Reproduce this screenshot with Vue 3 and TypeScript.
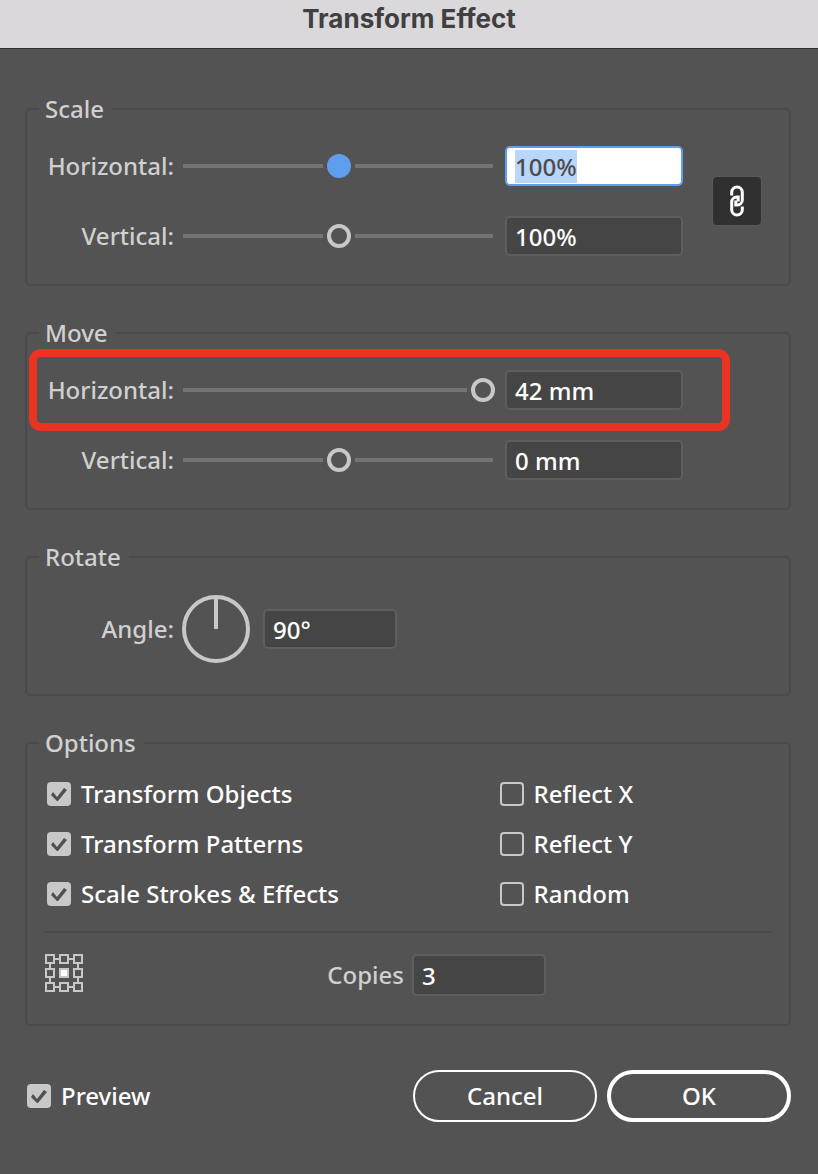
<script setup lang="ts">
import { onMounted, reactive, ref } from 'vue'

interface SliderRow {
  id: string
  label: string
  min: number
  max: number
  position: number
  text: string
  active?: boolean
  marked?: boolean
}

interface Option {
  id: string
  label: string
  checked: boolean
}

const scaleRows = reactive<SliderRow[]>([
  { id: 'scale-h', label: 'Horizontal:', min: 0, max: 200, position: 100, text: '100%', active: true },
  { id: 'scale-v', label: 'Vertical:', min: 0, max: 200, position: 100, text: '100%' },
])

const moveRows = reactive<SliderRow[]>([
  { id: 'move-h', label: 'Horizontal:', min: -35, max: 35, position: 35, text: '42 mm', marked: true },
  { id: 'move-v', label: 'Vertical:', min: -35, max: 35, position: 0, text: '0 mm' },
])

const options = reactive<Option[]>([
  { id: 'objects', label: 'Transform Objects', checked: true },
  { id: 'reflect-x', label: 'Reflect X', checked: false },
  { id: 'patterns', label: 'Transform Patterns', checked: true },
  { id: 'reflect-y', label: 'Reflect Y', checked: false },
  { id: 'strokes', label: 'Scale Strokes & Effects', checked: true },
  { id: 'random', label: 'Random', checked: false },
])

const angle = ref('90°')
const copies = ref('3')
const preview = ref(true)
const linked = ref(true)

const anchors = [0, 14, 28].flatMap((y) => [0, 14, 28].map((x) => ({ x, y })))
  .filter((a) => !(a.x === 14 && a.y === 14))

onMounted(() => {
  const field = document.getElementById('scale-h') as HTMLInputElement | null
  field?.focus()
  field?.select()
})
</script>

<template>
  <div class="dialog" role="dialog" aria-labelledby="dialog-title">
    <header class="titlebar">
      <h1 id="dialog-title">Transform Effect</h1>
    </header>

    <form class="body" @submit.prevent>
      <fieldset class="group">
        <legend>Scale</legend>
        <div class="sliders">
          <div class="rows">
            <div v-for="row in scaleRows" :key="row.id" class="row">
              <label :for="row.id">{{ row.label }}</label>
              <input
                v-model.number="row.position"
                type="range"
                :class="{ active: row.active }"
                :min="row.min"
                :max="row.max"
                :aria-label="'Scale ' + row.label"
              />
              <input :id="row.id" v-model="row.text" class="field" type="text" />
            </div>
          </div>
          <button
            class="link"
            type="button"
            aria-label="Constrain proportions"
            :aria-pressed="linked"
            @click="linked = !linked"
          >
            <svg viewBox="0 0 48 48" width="48" height="48" aria-hidden="true">
              <path d="M18.700 18.500V15.300a5.300 5.300 0 0 1 10.600 0V23a5 5 0 0 1-5 5H22.800V23.500" />
              <path d="M29.300 29.500V32.700a5.300 5.300 0 0 1-10.600 0V25a5 5 0 0 1 5-5H25.200V24.500" />
            </svg>
          </button>
        </div>
      </fieldset>

      <fieldset class="group">
        <legend>Move</legend>
        <div class="sliders">
          <div class="rows">
            <div v-for="row in moveRows" :key="row.id" class="row" :class="{ marked: row.marked }">
              <label :for="row.id">{{ row.label }}</label>
              <input
                v-model.number="row.position"
                type="range"
                :min="row.min"
                :max="row.max"
                :aria-label="'Move ' + row.label"
              />
              <input :id="row.id" v-model="row.text" class="field" type="text" />
            </div>
          </div>
          <span class="spacer"></span>
        </div>
      </fieldset>

      <fieldset class="group">
        <legend>Rotate</legend>
        <div class="rotate">
          <label for="angle">Angle:</label>
          <button class="dial" type="button" aria-label="Angle dial">
            <svg viewBox="0 0 68 68" width="68" height="68" aria-hidden="true">
              <circle cx="34" cy="34" r="32" />
              <path d="M34 2V34" />
            </svg>
          </button>
          <input id="angle" v-model="angle" class="field short" type="text" />
        </div>
      </fieldset>

      <fieldset class="group options-group">
        <legend>Options</legend>
        <div class="options">
          <label v-for="option in options" :key="option.id" class="check" :for="option.id">
            <input :id="option.id" v-model="option.checked" type="checkbox" />
            <span>{{ option.label }}</span>
          </label>
        </div>
        <hr />
        <div class="copies">
          <div class="copies-label">
            <button class="anchor" type="button" aria-label="Reference point">
              <svg viewBox="0 0 38 38" width="38" height="38" aria-hidden="true">
                <path d="M10 5H14M24 5H28M10 33H14M24 33H28M5 10V14M5 24V28M33 10V14M33 24V28" />
                <rect v-for="a in anchors" :key="a.x + '-' + a.y" :x="a.x + 1" :y="a.y + 1" width="8" height="8" />
                <rect class="center" x="15" y="15" width="8" height="8" />
              </svg>
            </button>
            <label for="copies">Copies</label>
          </div>
          <input id="copies" v-model="copies" class="field short" type="text" />
        </div>
      </fieldset>

      <footer class="actions">
        <label class="check" for="preview">
          <input id="preview" v-model="preview" type="checkbox" />
          <span>Preview</span>
        </label>
        <div class="buttons">
          <button class="pill" type="button">Cancel</button>
          <button class="pill primary" type="submit">OK</button>
        </div>
      </footer>
    </form>
  </div>
</template>

<style>
body {
  margin: 0;
  background: #535353;
}
</style>

<style scoped>
.dialog {
  min-height: 100vh;
  box-sizing: border-box;
  background: #535353;
  border-bottom: 1px solid #4a4848;
  color: #d0d0d0;
  font: 500 24px/30px "Noto Sans", "Open Sans", sans-serif;
}

.dialog *,
.dialog *::before {
  box-sizing: border-box;
}

.titlebar {
  padding-bottom: 10px;
  border-bottom: 1px solid #2e322f;
  background: #dad8db;
  text-align: center;
}

h1 {
  margin: 0;
  color: #404040;
  font: 700 26px/38px Inter, sans-serif;
}

.body {
  display: flex;
  flex-direction: column;
  gap: 32px;
  padding: 45px 27px 52px 25px;
}

.group {
  min-width: 0;
  margin: 0;
  padding: 22px 18px 28px;
  border: 2px solid #4a4a4a;
  border-radius: 5px;
}

.options-group {
  padding-top: 21px;
}

legend {
  margin-left: -6px;
  padding: 0 8px 0 6px;
}

.sliders {
  display: flex;
  align-items: center;
  gap: 30px;
  padding-right: 10px;
}

.rows {
  flex: 1;
  display: grid;
  gap: 30px;
}

.row {
  position: relative;
  display: grid;
  grid-template-columns: 129px 1fr 178px;
  align-items: center;
}

.row label,
.rotate label {
  text-align: right;
}

.marked::before {
  content: "";
  position: absolute;
  inset: -21px -47px -21px -16px;
  border: 8px solid #eb3323;
  border-radius: 12px;
  pointer-events: none;
}

.spacer {
  width: 48px;
}

input[type="range"] {
  appearance: none;
  min-width: 0;
  height: 24px;
  margin: 0 10px 0 9px;
  background: linear-gradient(#737373, #737373) left center / calc(100% - 2px) 4px no-repeat;
  outline: none;
}

input[type="range"]::-webkit-slider-thumb {
  appearance: none;
  width: 24px;
  height: 24px;
  border: 4px solid #c8c8c8;
  border-radius: 50%;
  background: #535353;
  box-shadow: 0 0 0 4px #535353;
}

input[type="range"].active::-webkit-slider-thumb {
  border-color: #5f9eee;
  background: #5f9eee;
}

.field {
  width: 100%;
  height: 40px;
  padding: 0 8px;
  border: 2px solid #5e5e5e;
  border-radius: 5px;
  background: #454545;
  color: #fff;
  font: inherit;
  outline: none;
}

.field:focus {
  border-color: #5f9eee;
  background: #fff;
  color: #4b4b4b;
}

.field::selection {
  background: #b9d6fb;
  color: #4b4b4b;
}

.field.short {
  width: 134px;
}

button {
  margin: 0;
  padding: 0;
  border: 0;
  background: none;
  color: #fff;
  font: inherit;
}

svg {
  display: block;
  fill: none;
}

.link {
  width: 48px;
  height: 48px;
  border-radius: 4px;
  background: #303030;
  box-shadow: 0 0 0 1px #595959;
}

.link path {
  stroke: #fff;
  stroke-width: 3;
}

.rotate {
  display: grid;
  grid-template-columns: 129px 68px 1fr;
  align-items: center;
  padding: 1px 0 3px;
}

.dial {
  margin-left: 8px;
}

.rotate .field {
  margin-left: 21px;
}

.dial svg {
  stroke: #c8c8c8;
  stroke-width: 4;
}

.options {
  display: grid;
  grid-template-columns: 5fr 3fr;
  row-gap: 20px;
  padding-left: 2px;
}

.check {
  display: flex;
  align-items: center;
  gap: 10px;
  color: #fff;
}

input[type="checkbox"] {
  appearance: none;
  flex: none;
  width: 24px;
  height: 24px;
  margin: 0;
  border: 2px solid #c8c8c8;
  border-radius: 4px;
}

input[type="checkbox"]:checked {
  border: 0;
  background: #c8c8c8;
}

input[type="checkbox"]:checked::before {
  content: "";
  display: block;
  width: 24px;
  height: 24px;
  background: #505050;
  clip-path: polygon(4px 13px, 6px 10px, 10px 15px, 17px 6px, 20px 8px, 11px 19px, 10px 19px);
}

hr {
  height: 2px;
  margin: 22px 0 21px;
  border: 0;
  background: #4a4a4a;
}

.copies {
  display: grid;
  grid-template-columns: 1fr 1fr;
  gap: 8px;
}

.copies .field {
  height: 42px;
}

.copies-label {
  display: flex;
  justify-content: space-between;
}

.copies-label label {
  align-self: center;
}

.anchor {
  align-self: flex-start;
}

.anchor svg {
  stroke: #c8c8c8;
  stroke-width: 2;
}

.anchor .center {
  fill: #fff;
}

.actions {
  display: flex;
  align-items: center;
  justify-content: space-between;
  margin-top: 12px;
  padding-left: 2px;
}

.buttons {
  display: flex;
  gap: 10px;
}

.pill {
  width: 184px;
  height: 52px;
  border: 2px solid #fff;
  border-radius: 26px;
}

.primary {
  border-width: 4px;
}
</style>
